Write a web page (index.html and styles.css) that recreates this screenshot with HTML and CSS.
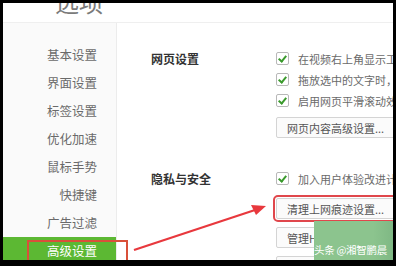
FILE: index.html
```html
<!DOCTYPE html>
<html lang="zh-CN">
<head>
  <meta charset="UTF-8" />
  <title>选项</title>
  <link rel="stylesheet" href="styles.css">
</head>
<body>
  <div class="window">
    <header class="header">
      <h1 class="title">选项</h1>
    </header>

    <div class="main">
      <nav class="sidebar">
        <div class="nav-item">基本设置</div>
        <div class="nav-item">界面设置</div>
        <div class="nav-item">标签设置</div>
        <div class="nav-item">优化加速</div>
        <div class="nav-item">鼠标手势</div>
        <div class="nav-item">快捷键</div>
        <div class="nav-item">广告过滤</div>
        <div class="nav-item active">高级设置</div>
      </nav>

      <div class="content">
        <section class="group group-web">
          <h2 class="group-title">网页设置</h2>
          <div class="group-body">
            <label class="check"><span class="box"></span>在视频右上角显示工具栏</label>
            <label class="check"><span class="box"></span>拖放选中的文字时，自动搜索</label>
            <label class="check"><span class="box"></span>启用网页平滑滚动效果</label>
            <button class="btn btn-wide">网页内容高级设置...</button>
          </div>
        </section>

        <section class="group group-privacy">
          <h2 class="group-title">隐私与安全</h2>
          <div class="group-body">
            <label class="check"><span class="box"></span>加入用户体验改进计划</label>
            <button class="btn marked">清理上网痕迹设置...</button>
            <button class="btn">管理HTTPS证书...</button>
            <button class="btn">管理密码...</button>
          </div>
        </section>
      </div>
    </div>

    <!--标注：红框和箭头 -->
    <div class="mark-box"></div>
    <svg class="arrow" width="390" height="257" viewBox="0 0 390 257">
      <line x1="131" y1="247" x2="252" y2="207" stroke="#e8383d" stroke-width="2.2" />
      <polygon points="263,203 248,202 253,212" fill="#e8383d" />
    </svg>

    <div class="watermark">头条 @湘智鹏晨</div>
  </div>
</body>
</html>
```

FILE: styles.css
```css
html, body {
  margin: 0;
  padding: 0;
}

body {
  background: #000;
  width: 396px;
  height: 266px;
  padding: 3px 3px 6px 3px;
  box-sizing: border-box;
  font-family: "Noto Sans CJK SC", "Noto Sans", sans-serif;
  overflow: hidden;
}

.window {
  position: relative;
  width: 390px;
  height: 257px;
  background: #fff;
  overflow: hidden;
}

/* HEADER */
.header {
  height: 19px;
  border-bottom: 1px solid #efefef;
  overflow: hidden;
}

.title {
  margin: -13px 0 0 52px;
  font-size: 24px;
  line-height: 24px;
  font-weight: normal;
  color: #7a7a7a;
}

/* MAIN */
.main {
  display: flex;
  height: 237px;
}

.sidebar {
  width: 113px;
  flex-shrink: 0;
  background: #fafafa;
  border-right: 1px solid #ececec;
  padding-top: 18px;
}

.nav-item {
  height: 28px;
  line-height: 28px;
  text-align: right;
  padding-right: 19px;
  font-size: 12.5px;
  color: #6a6a6a;
}

.nav-item.active {
  background: #5cb833;
  color: #fff;
}

.content {
  padding: 25px 0 0 34px;
  white-space: nowrap;
}

.group {
  display: flex;
}

.group-privacy {
  margin-top: 30px;
}

.group-title {
  width: 125px;
  flex-shrink: 0;
  margin: 0;
  font-size: 12px;
  line-height: 21px;
  font-weight: bold;
  color: #333;
}

.group-body {
  display: flex;
  flex-direction: column;
  align-items: flex-start;
}

.check {
  display: flex;
  align-items: center;
  height: 21px;
  font-size: 11px;
  color: #6a6a6a;
}

.box {
  position: relative;
  width: 11px;
  height: 11px;
  margin-right: 9px;
  border: 1px solid #b8b8b8;
  border-radius: 2px;
  background: #fff;
}

.box::after {
  content: "";
  position: absolute;
  left: 3px;
  top: 1px;
  width: 3px;
  height: 6px;
  border: solid #3a9a2c;
  border-width: 0 2px 2px 0;
  transform: rotate(40deg);
}

.btn {
  height: 21px;
  margin-top: 6px;
  padding: 0 10px;
  border: 1px solid #d4d4d4;
  border-radius: 2px;
  background: #fbfbfb;
  font-family: inherit;
  font-size: 11px;
  color: #555;
  text-align: left;
  min-width: 112px;
}

.btn-wide {
  min-width: 132px;
}

.group-privacy .btn {
  margin-top: 9px;
}

.group-privacy .btn + .btn {
  margin-top: 8px;
}

.btn.marked {
  outline: 2px solid #e0474c;
  outline-offset: 1px;
}

/* ANNOTATIONS */
.mark-box {
  position: absolute;
  left: 24px;
  top: 237px;
  width: 97px;
  height: 20px;
  border: 2px solid #d9503a;
}

.arrow {
  position: absolute;
  left: 0;
  top: 0;
}

.watermark {
  position: absolute;
  left: 311px;
  top: 218px;
  width: 79px;
  height: 39px;
  background: linear-gradient(90deg, #8cc48e 0%, #8cc48e 75%, #7fb884 100%);
  color: #fff;
  font-size: 10.5px;
  line-height: 14px;
  letter-spacing: -0.3px;
  display: flex;
  align-items: flex-end;
  padding-bottom: 3px;
  box-sizing: border-box;
  white-space: nowrap;
  overflow: hidden;
}
```
